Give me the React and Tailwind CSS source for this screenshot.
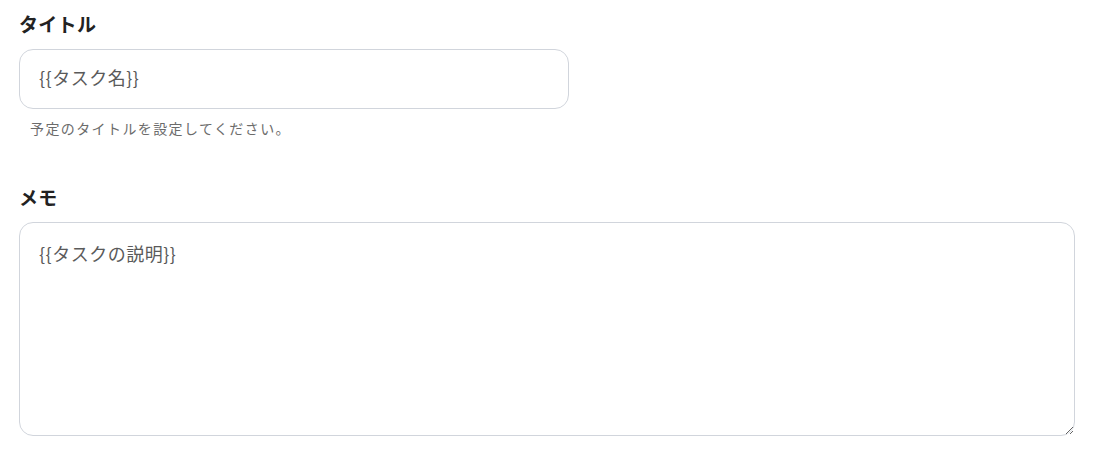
import React from 'react';

const font = { fontFamily: '"Noto Sans CJK JP", "Noto Sans", sans-serif' };

export default function App() {
  return (
    <div className="bg-white min-h-screen pl-[19px] pt-[10px] text-[#222]" style={font}>
      {/* タイトル */}
      <div>
        <label className="block text-[19px] leading-[27px] font-bold tracking-[0.3px] text-[#222]">タイトル</label>
        <input
          type="text"
          defaultValue="{{タスク名}}"
          className="mt-[12px] block w-[550px] h-[60px] rounded-[14px] border border-gray-300 pl-[19px] pb-[4px] text-[18px] tracking-[0.5px] text-[#5a5a5a] outline-none"
          style={font}
        />
        <p className="mt-[9px] ml-[11px] text-[14px] leading-[20px] tracking-[1.4px] text-[#6b6b6b]">予定のタイトルを設定してください。</p>
      </div>

      {/* メモ */}
      <div className="mt-[45px]">
        <label className="block text-[19px] leading-[27px] font-bold tracking-[0.3px] text-[#222]">メモ</label>
        <textarea
          defaultValue="{{タスクの説明}}"
          className="mt-[12px] block w-[1056px] h-[214px] rounded-[14px] border border-gray-300 px-[19px] pt-[17px] text-[18px] leading-[27px] tracking-[0.5px] text-[#5a5a5a] outline-none"
          style={font}
        />
      </div>
    </div>
  );
}
